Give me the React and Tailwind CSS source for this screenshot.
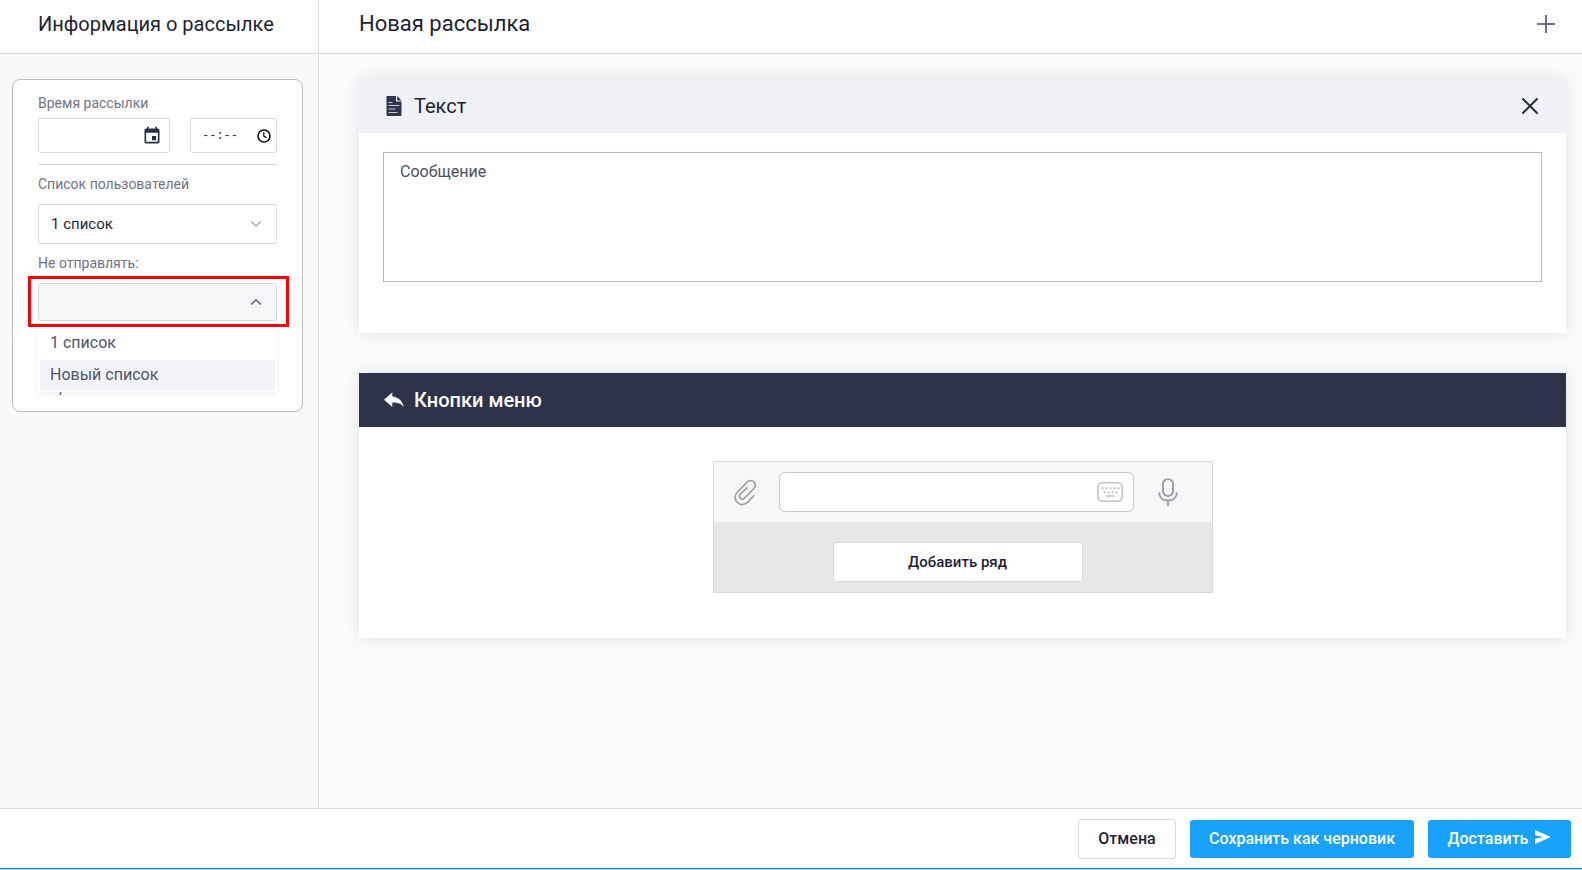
import React, { useState } from 'react';

const CalendarIcon = () => (
  <svg viewBox="0 0 24 24" fill="currentColor" className="h-5 w-5">
    <path d="M17 12h-5v5h5v-5zM16 1v2H8V1H6v2H5c-1.11 0-1.99.9-1.99 2L3 19c0 1.1.89 2 2 2h14c1.1 0 2-.9 2-2V5c0-1.1-.9-2-2-2h-1V1h-2zm3 18H5V8h14v11z" />
  </svg>
);

const ClockIcon = () => (
  <svg viewBox="0 0 14 14" fill="none" stroke="currentColor" strokeWidth="1.5" className="h-3.5 w-3.5">
    <circle cx="7" cy="7" r="6" />
    <path d="M6.8 3.2v3.9l2.9 1.7" strokeWidth="1.2" />
  </svg>
);

const ChevronIcon = ({ className }) => (
  <svg viewBox="0 0 12 8" fill="none" stroke="currentColor" strokeWidth="1.3" className={className}>
    <path d="M1.2 1.5 6 6.2l4.8-4.7" />
  </svg>
);

const DocumentIcon = () => (
  <svg viewBox="0 0 16 20" className="h-5 w-4">
    <path fill="#2f334b" d="M1 0h9v5.500h5.500V19a1 1 0 0 1-1 1H1.500a1 1 0 0 1-1-1V.5z" />
    <path fill="#2f334b" d="M11.200 0l4.300 4.400h-4.300z" />
    <path stroke="#c9cad8" strokeWidth="1" d="M2.500 6.500h4M2.500 9.500h11M2.500 13h7M2.500 16.500h9" />
  </svg>
);

const ReplyIcon = () => (
  <svg viewBox="0 0 20 16" fill="currentColor" className="h-4 w-5">
    <path d="M0 7.700 8.300.5v4c6 .6 10 4 11.500 10.700-3-3.800-6.500-4.700-11.500-4.600v4.300z" />
  </svg>
);

const ClipIcon = () => (
  <svg viewBox="0 0 24 28" fill="none" stroke="#9b9b9b" strokeWidth="1.6" strokeLinecap="round" className="h-7 w-6">
    <path d="M21 17.500l-6.500 6.800c-3 3-7.300 3-10.200.2-2.900-2.900-2.900-7.200 0-10.200L14 4.200c2.100-2.200 5-2.300 6.900-.4 2 1.900 1.900 4.800-.2 7L11.600 20c-1.300 1.400-3 1.400-4.200.3-1.200-1.200-1.100-2.900.2-4.300l6.200-6.300" />
  </svg>
);

const KeyboardIcon = () => (
  <svg viewBox="0 0 26 20" fill="none" stroke="#c2c2c2" className="h-5 w-6.5">
    <rect x=".8" y=".8" width="24.400" height="18.400" rx="4.500" strokeWidth="1.6" />
    <path d="M4.500 6.200h18" strokeWidth="2" strokeDasharray="2 2" />
    <path d="M6.500 10.200h14" strokeWidth="2" strokeDasharray="2 2" />
    <path d="M9 14h8.500" strokeWidth="1.6" />
  </svg>
);

const MicIcon = () => (
  <svg viewBox="0 0 20 28" fill="none" stroke="#8a93a2" strokeWidth="1.7" className="h-7 w-5">
    <rect x="5" y="1" width="10" height="17" rx="5" />
    <path d="M1.200 14.500c0 5 3.500 8 8.800 8s8.800-3 8.800-8M10 22.500V28" />
  </svg>
);

const SendIcon = () => (
  <svg viewBox="0 0 16 14" fill="currentColor" className="mb-1 h-3.5 w-4">
    <path d="M0 0 16 7 0 14V8.700L8.500 7 0 5.300z" />
  </svg>
);

const lists = ['1 список', 'Новый список'];

export default function App() {
  const [message, setMessage] = useState('');

  return (
    <div className="flex min-h-screen flex-col border-b border-[#cfcfcf] bg-[#fbfbfb] font-['Roboto',sans-serif] text-[#1f1f33]">
      <div className="flex flex-1">
        {/* Sidebar */}
        <aside className="flex w-[319px] shrink-0 flex-col border-r border-[#d9dbe0]">
          <header className="flex h-[54px] items-center border-b border-[#d5d8dc] bg-white pb-1.5 pl-[38px]">
            <h2 className="text-xl whitespace-nowrap">Информация о рассылке</h2>
          </header>

          <div className="flex-1 bg-[#f9f9f9] px-3 pt-[25px]">
            <form className="h-[333px] w-[291px] rounded-lg border border-[#bcbcbc] bg-white px-[25px] pt-[13px] text-sm">
              <label htmlFor="send-date" className="block h-[25px] leading-5 text-[#707487]">Время рассылки</label>
              <div className="flex justify-between">
                <div className="flex h-[35px] w-[132px] items-center rounded-[3px] border border-[#d7d7e5] pr-[7px]">
                  <input id="send-date" type="text" className="w-full min-w-0 flex-1 pl-3 outline-none" />
                  <span className="text-[#2a2f45]"><CalendarIcon /></span>
                </div>
                <div className="flex h-[35px] w-[87px] items-center rounded-[3px] border border-[#d7d7e5] pr-[5px] pl-[11px]">
                  <input aria-label="Время" type="text" placeholder="--:--" className="w-full min-w-0 flex-1 font-['Liberation_Mono',monospace] text-xs outline-none placeholder:text-[#2a2f45]" />
                  <span className="text-black"><ClockIcon /></span>
                </div>
              </div>

              <hr className="mt-[11px] border-[#d5d8de]" />

              <label htmlFor="users" className="mt-[9px] block h-[30px] leading-5 text-[#707487]">Список пользователей</label>
              <div className="grid items-center">
                <select id="users" className="col-start-1 row-start-1 h-10 w-full appearance-none rounded-[3px] border border-[#d7d7e5] bg-white pt-0.5 pl-3 text-[15px] outline-none">
                  <option>1 список</option>
                  <option>Новый список</option>
                </select>
                <ChevronIcon className="pointer-events-none col-start-1 row-start-1 mr-[15px] h-2 w-3 justify-self-end text-[#9aa3c0]" />
              </div>

              <label htmlFor="exclude" className="mt-[9px] block h-[23px] leading-5 text-[#707487]">Не отправлять:</label>
              <div className="relative -mr-3 -ml-[10px] border-3 border-[#fb0007] pt-1 pr-[9px] pb-[3px] pl-[7px]">
                <button id="exclude" type="button" aria-expanded="true" className="flex h-[38px] w-full items-center justify-end rounded-[3px] border border-[#d7d7e5] bg-[#f6f7f9] pr-[14px]">
                  <ChevronIcon className="h-2 w-3 rotate-180 text-[#4b5066]" />
                </button>
                <ul className="absolute top-full right-[9px] left-[7px] z-10 mt-[3px] rounded-b-[3px] bg-white px-0.5 pb-0.5 text-base text-[#50556c] shadow-[0_2px_6px_rgba(0,0,0,0.08)]">
                  {lists.map((list, index) => (
                    <li key={list} className={index === 1 ? 'h-[30px] bg-[#f2f3f8] px-[10px] leading-[30px]' : 'h-[33px] px-[10px] leading-[31px]'}>
                      {list}
                    </li>
                  ))}
                </ul>
              </div>
              <a href="#" className="mt-[50px] ml-3 block leading-5 text-[#3e6a96]">Время</a>
            </form>
          </div>
        </aside>

        {/* Content */}
        <main className="min-w-0 flex-1">
          <header className="flex h-[54px] items-center justify-between border-b border-[#d5d8dc] bg-white pr-[26px] pb-1.5 pl-10">
            <h1 className="text-[22px]">Новая рассылка</h1>
            <button type="button" aria-label="Добавить" className="text-[#6b6f8a]">
              <svg viewBox="0 0 20 20" fill="none" stroke="currentColor" strokeWidth="2" className="h-5 w-5"><path d="M1 10h18M10 1v18" /></svg>
            </button>
          </header>

          <div className="flex flex-col gap-10 pt-[25px] pr-4 pl-10">
            <section className="bg-white shadow-[0_0_14px_rgba(50,70,80,0.14)]">
              <div className="flex h-[54px] items-center justify-between bg-[#f0f1f7] pr-7 pl-[27px]">
                <h3 className="flex items-center gap-3 text-xl"><DocumentIcon />Текст</h3>
                <button type="button" aria-label="Закрыть" className="text-[#2a2f45]">
                  <svg viewBox="0 0 16 16" fill="none" stroke="currentColor" strokeWidth="2" strokeLinecap="round" className="h-4 w-4"><path d="M1 1l14 14M15 1 1 15" /></svg>
                </button>
              </div>
              <div className="px-6 pt-[19px] pb-[51px]">
                <textarea
                  aria-label="Сообщение"
                  placeholder="Сообщение"
                  value={message}
                  onChange={(e) => setMessage(e.target.value)}
                  className="block h-[130px] w-full resize-none border border-[#afbbcf] px-4 py-[7px] text-base outline-none placeholder:text-[#4b4f63]"
                />
              </div>
            </section>

            <section className="bg-white shadow-[0_0_14px_rgba(50,70,80,0.14)]">
              <div className="flex h-[54px] items-center bg-[#2f334a] pl-[25px] text-white">
                <h3 className="flex items-center gap-[10px] text-xl font-medium"><ReplyIcon />Кнопки меню</h3>
              </div>
              <div className="px-6 pt-[34px] pb-[45px]">
                <div className="mx-auto w-[500px] border border-[#d3d8e4] bg-[#e7e7e7]">
                  <div className="flex h-[60px] items-center bg-[#f7f7f7] pl-[19px]">
                    <ClipIcon />
                    <div className="ml-[22px] flex h-10 w-[355px] items-center rounded-md border border-[#c5c5c5] bg-white pr-[10px]">
                      <input aria-label="Сообщение бота" type="text" className="min-w-0 flex-1 pl-3 outline-none" />
                      <KeyboardIcon />
                    </div>
                    <span className="ml-6"><MicIcon /></span>
                  </div>
                  <div className="flex justify-center pt-5 pr-[10px] pb-[10px]">
                    <button type="button" className="h-10 w-[250px] rounded-[3px] border border-[#d7d7e5] bg-white text-[15px] font-medium">Добавить ряд</button>
                  </div>
                </div>
              </div>
            </section>
          </div>
        </main>
      </div>

      {/* Footer */}
      <footer className="flex h-[61px] items-center justify-end gap-[14px] border-t border-b border-t-[#d7d7e5] border-b-[#1580d8] bg-white pr-[11px] text-base font-medium">
        <button type="button" className="h-10 w-[98px] rounded-[3px] border border-[#d7d7e5]">Отмена</button>
        <button type="button" className="h-[38px] w-[224px] rounded-[3px] bg-[#18a2fb] text-white">Сохранить как черновик</button>
        <button type="button" className="flex h-[38px] w-[143px] items-center justify-center gap-[7px] rounded-[3px] bg-[#18a2fb] text-white">Доставить<SendIcon /></button>
      </footer>
    </div>
  );
}
